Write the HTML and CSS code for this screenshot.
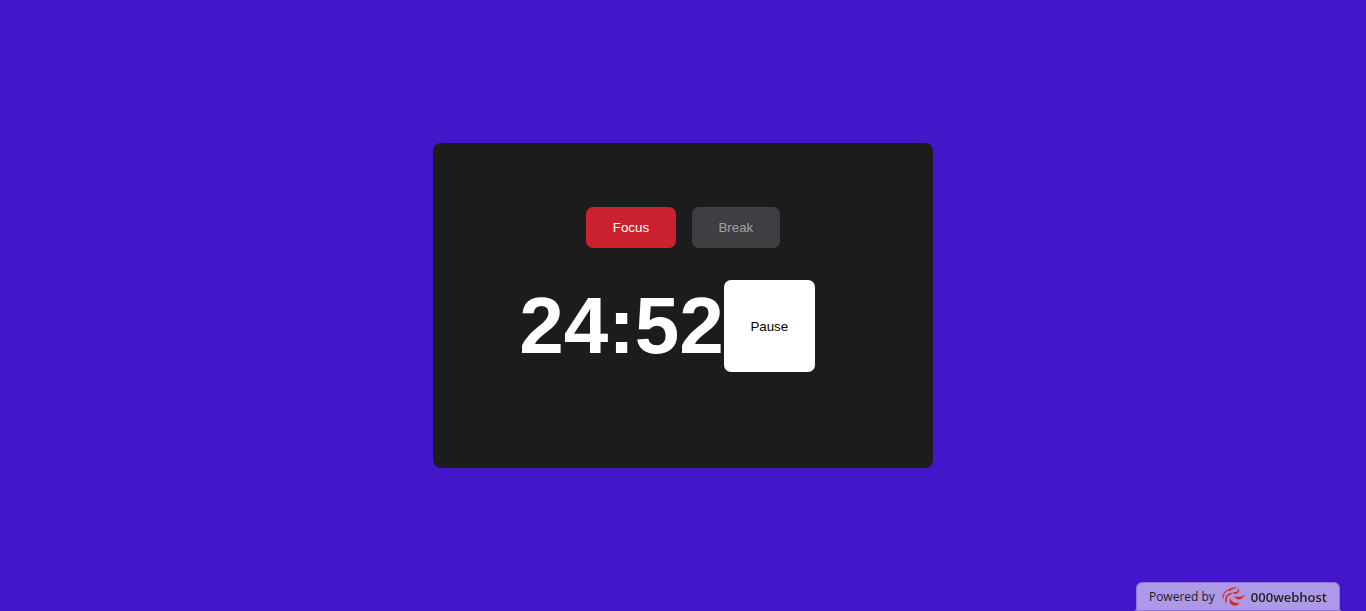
FILE: index.html
```html
<!DOCTYPE html>
<html lang="en">
<head>
<meta charset="utf-8">
<meta name="viewport" content="width=device-width, initial-scale=1">
<title>Pomodoro Timer</title>
<link rel="stylesheet" href="styles.css">
</head>
<body>
<main class="timer">
  <div class="modes">
    <button type="button" class="btn btn-focus">Focus</button>
    <button type="button" class="btn btn-break">Break</button>
  </div>
  <div class="clock">
    <h1 class="time">24:52</h1>
    <button type="button" class="btn btn-pause">Pause</button>
  </div>
</main>
<a class="badge" href="#">
  <span class="badge-label">Powered by</span>
  <svg class="badge-logo" viewBox="0 0 24 22" aria-hidden="true">
    <g fill="none" stroke="#e1251b" stroke-linecap="round">
      <path stroke-width="1.200" d="M1 12C1 8 3 5 7 4"/>
      <path stroke-width="1.400" d="M4 16C3.500 12 5 8.500 9 7.500"/>
    </g>
    <g fill="#e1251b">
      <path d="M6 4C9 1.500 12 1 16 2C13 2.200 10 3 8 5Z"/>
      <path d="M11 6C15 7 16.500 4.500 16.500 2C18.500 5 16 9 11 7.500Z"/>
      <path d="M12 9.500C15 12 20 11.500 23 8C21 14.500 14 15.500 12 9.500Z"/>
      <path d="M8 12C9 16 13 16.500 17.500 17.500C12 22.500 5.500 18 8 12Z"/>
    </g>
  </svg>
  <span class="badge-name">000webhost</span>
</a>
</body>
</html>
```
FILE: styles.css
```css
* {
  box-sizing: border-box;
}

body {
  margin: 0;
  min-height: 100vh;
  display: flex;
  align-items: center;
  justify-content: center;
  background: #4416c9;
  font-family: "Liberation Sans", Arial, sans-serif;
}

.timer {
  width: 100%;
  max-width: 500px;
  padding: 64px 64px 96px;
  border-radius: 8px;
  background: #1c1c1c;
}

.modes {
  display: flex;
  justify-content: center;
  gap: 16px;
  margin-bottom: 32px;
}

.clock {
  display: flex;
  justify-content: center;
  margin-right: 32px;
}

.time {
  margin: 0;
  color: #fff;
  font-size: 80px;
  line-height: 92px;
}

.btn {
  padding: 13px 2em;
  border: 0;
  border-radius: 7px;
  font-family: inherit;
  cursor: pointer;
}

.btn-focus {
  background: #cb212f;
  color: #fff;
}

.btn-break {
  background: #3f3f43;
  color: #a0a0a0;
}

.btn-pause {
  background: #fff;
  color: #000;
}

.badge {
  position: fixed;
  right: 26px;
  bottom: 0;
  display: flex;
  align-items: center;
  height: 29px;
  padding: 0 12px;
  border: 1px solid #8d73d8;
  border-radius: 6px 6px 0 0;
  background: #ae98e8;
  color: #222;
  font-family: "Open Sans", "Noto Sans", sans-serif;
  text-decoration: none;
}

.badge::before,
.badge::after {
  content: "";
  position: absolute;
  bottom: -1px;
  width: 5px;
  height: 4px;
}

.badge::before {
  right: 100%;
  background: radial-gradient(circle at top left, transparent 4px, #8d73d8 5px);
}

.badge::after {
  left: 100%;
  background: radial-gradient(circle at top right, transparent 4px, #8d73d8 5px);
}

.badge-label {
  font-size: 12px;
}

.badge-logo {
  width: 24px;
  height: 22px;
  margin: 0 5px 0 7px;
}

.badge-name {
  font-size: 13px;
  font-weight: 600;
}
```
